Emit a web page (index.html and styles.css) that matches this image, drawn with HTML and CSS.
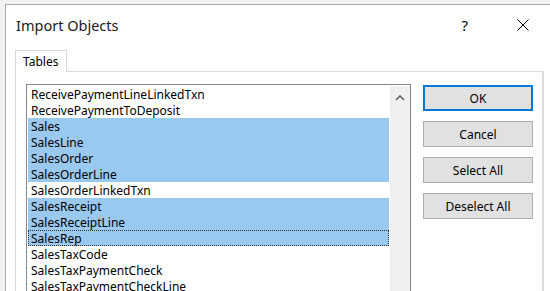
FILE: index.html
```html
<!DOCTYPE html>
<html lang="en">
<head>
    <meta charset="UTF-8">
    <title>Import Objects</title>
    <link rel="stylesheet" href="styles.css">
</head>
<body>
    <div class="window">
        <!-- Barra de título -->
        <div class="titlebar">
            <span class="title">Import Objects</span>
            <span class="help">?</span>
            <span class="close">
                <svg width="12" height="12" viewBox="0 0 12 12"><path d="M0.5 0.5 L11.5 11.5 M11.5 0.5 L0.5 11.5" stroke="#000" stroke-width="1"/></svg>
            </span>
        </div>

        <div class="tabs">
            <div class="tab">Tables</div>
        </div>

        <div class="panel">
            <div class="listbox">
                <div class="items">
                    <div class="item">ReceivePaymentLineLinkedTxn</div>
                    <div class="item">ReceivePaymentToDeposit</div>
                    <div class="item selected">Sales</div>
                    <div class="item selected">SalesLine</div>
                    <div class="item selected">SalesOrder</div>
                    <div class="item selected">SalesOrderLine</div>
                    <div class="item">SalesOrderLinkedTxn</div>
                    <div class="item selected">SalesReceipt</div>
                    <div class="item selected">SalesReceiptLine</div>
                    <div class="item selected focus">SalesRep</div>
                    <div class="item">SalesTaxCode</div>
                    <div class="item">SalesTaxPaymentCheck</div>
                    <div class="item">SalesTaxPaymentCheckLine</div>
                </div>
                <div class="scrollbar">
                    <svg width="10" height="6" viewBox="0 0 10 6"><path d="M1 5 L5 1 L9 5" fill="none" stroke="#606060" stroke-width="1.6"/></svg>
                </div>
            </div>

            <div class="buttons">
                <button class="btn btn-default">OK</button>
                <button class="btn">Cancel</button>
                <button class="btn">Select All</button>
                <button class="btn">Deselect All</button>
            </div>
        </div>
    </div>
</body>
</html>
```

FILE: styles.css
```css
body {
    margin: 0;
    padding: 4px 0 0 5px;
    height: 291px;
    box-sizing: border-box;
    overflow: hidden;
    background-color: #f2f2f2; /* sombra da janela */
    font-family: "Noto Sans", "Liberation Sans", sans-serif;
    color: #000;
}
.window {
    background-color: white;
    border-top: 1px solid #a8a8a8;
    border-left: 1px solid #a8a8a8;
    height: 100%;
    box-sizing: border-box;
}
.titlebar {
    height: 39px;
    display: flex;
    align-items: center;
    padding-left: 10px;
}
.title {
    flex: 1;
    font-size: 14.5px;
    color: #1a1a1a;
}
.help {
    font-size: 15px;
    margin-right: 49px;
}
.close {
    display: flex;
    margin-right: 21px;
}
.tabs {
    display: flex;
    padding: 6px 0 0 9px;
}
.tab {
    width: 52px;
    height: 22px;
    border: 1px solid #d9d9d9;
    border-bottom: none;
    background-color: white;
    font-size: 12px;
    padding-left: 7px;
    box-sizing: border-box;
    line-height: 22px;
    margin-bottom: -1px;
    position: relative;
}
.panel {
    margin-left: 9px;
    width: 529px;
    height: 230px;
    border: 1px solid #d9d9d9;
    border-right: 2px solid #dcdcdc;
    box-sizing: border-box;
    display: flex;
    gap: 12px;
    padding: 12px 0 0 10px;
}
.listbox {
    width: 385px;
    height: 260px;
    border: 1px solid #828790;
    box-sizing: border-box;
    display: flex;
    padding: 1px 0 0 1px;
}
.items {
    flex: 1;
    padding-right: 1px;
}
.item {
    height: 16px;
    line-height: 18px;
    overflow: hidden;
    font-size: 12px;
    padding-left: 3px;
    white-space: nowrap;
    box-sizing: border-box;
}
.item.selected {
    background-color: #99c9ef; /* azul de seleção */
}
.item.focus {
    outline: 1px dotted #333;
    outline-offset: -1px;
}
.scrollbar {
    width: 20px;
    background-color: #f0f0f0;
    display: flex;
    justify-content: center;
    padding-top: 9px;
    box-sizing: border-box;
}
.scrollbar svg {
    display: block;
}
.buttons {
    display: flex;
    flex-direction: column;
    gap: 10px;
    padding-top: 1px;
}
.btn {
    width: 110px;
    height: 26px;
    background-color: #e1e1e1;
    border: 1px solid #adadad;
    font-family: "Noto Sans", "Liberation Sans", sans-serif;
    font-size: 12px;
    color: #000;
    padding: 0;
}
.btn-default {
    border: 2px solid #0078d7;
}
```
